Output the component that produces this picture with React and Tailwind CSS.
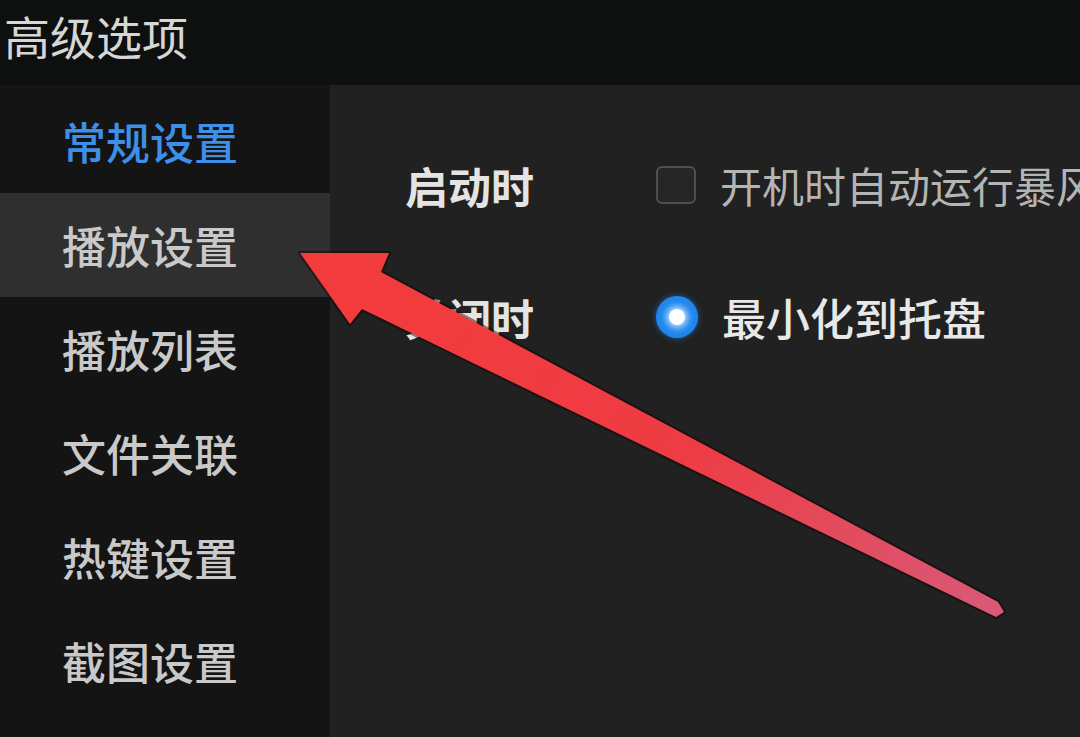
import React from "react";

const font = { fontFamily: '"Noto Sans CJK SC", "Noto Sans", sans-serif' };

const menu = ["常规设置", "播放设置", "播放列表", "文件关联", "热键设置", "截图设置"];

const Arrow = () => (
  <svg
    className="pointer-events-none absolute left-0 top-0"
    width="1080"
    height="737"
    viewBox="0 0 1080 737"
  >
    <defs>
      <linearGradient id="shaft" gradientUnits="userSpaceOnUse" x1="300" y1="253" x2="1004" y2="612">
        <stop offset="0" stopColor="#f33b3b" />
        <stop offset="0.55" stopColor="#ee3c44" />
        <stop offset="1" stopColor="#d85a78" />
      </linearGradient>
    </defs>
    <polygon
      points="300,253 389,253 381,272 998,602 1004,612 996,617 362,309 350,324"
      fill="none"
      stroke="rgba(20,0,0,0.45)"
      strokeWidth="4"
      strokeLinejoin="round"
    />
    <polygon
      points="300,253 389,253 381,272 998,602 1004,612 996,617 362,309 350,324"
      fill="url(#shaft)"
    />
  </svg>
);

export default function App() {
  return (
    <div
      className="relative flex h-[737px] w-[1080px] flex-col overflow-hidden bg-[#202120]"
      style={font}
    >
      <div className="h-[85px] shrink-0 bg-[#0e100f] pl-[4px] pt-[12px]">
        <span className="text-[46px] leading-none text-[#d6d6d6]">高级选项</span>
      </div>

      <div className="flex flex-1">
        <div className="w-[330px] shrink-0 bg-[#141414] pt-[4px]">
          {menu.map((item, i) => (
            <div
              key={item}
              className={
                "flex h-[104px] items-center pl-[62px] text-[44px] font-medium leading-none " +
                (i === 0
                  ? "text-[#3d8fe8]"
                  : i === 1
                  ? "bg-[#302f2f] text-[#c9c9c9]"
                  : "text-[#c9c9c9]")
              }
            >
              {item}
            </div>
          ))}
        </div>

        <div className="flex-1 overflow-hidden pl-[75px] pt-[70px]">
          <div className="flex h-[60px] items-center whitespace-nowrap">
            <span className="w-[251px] shrink-0 text-[43px] font-bold leading-none text-[#e4e4e4]">
              启动时
            </span>
            <span className="h-[38px] w-[40px] shrink-0 rounded-[6px] border-2 border-[#4f4f4f] bg-[#262626]" />
            <span className="ml-[24px] text-[42px] leading-none text-[#b4b4b4]">
              开机时自动运行暴风影音
            </span>
          </div>

          <div className="mt-[72px] flex h-[60px] items-center whitespace-nowrap">
            <span className="w-[251px] shrink-0 text-[43px] font-bold leading-none text-[#e4e4e4]">
              关闭时
            </span>
            <span className="flex h-[42px] w-[42px] shrink-0 items-center justify-center rounded-full bg-[#1f86ee] shadow-[0_0_6px_rgba(31,134,238,0.6)]">
              <span className="h-[16px] w-[16px] rounded-full bg-white shadow-[0_0_6px_3px_rgba(200,230,255,0.9)]" />
            </span>
            <span className="ml-[24px] text-[44px] font-medium leading-none text-[#e8e8e8]">
              最小化到托盘
            </span>
          </div>
        </div>
      </div>

      <Arrow />
    </div>
  );
}
